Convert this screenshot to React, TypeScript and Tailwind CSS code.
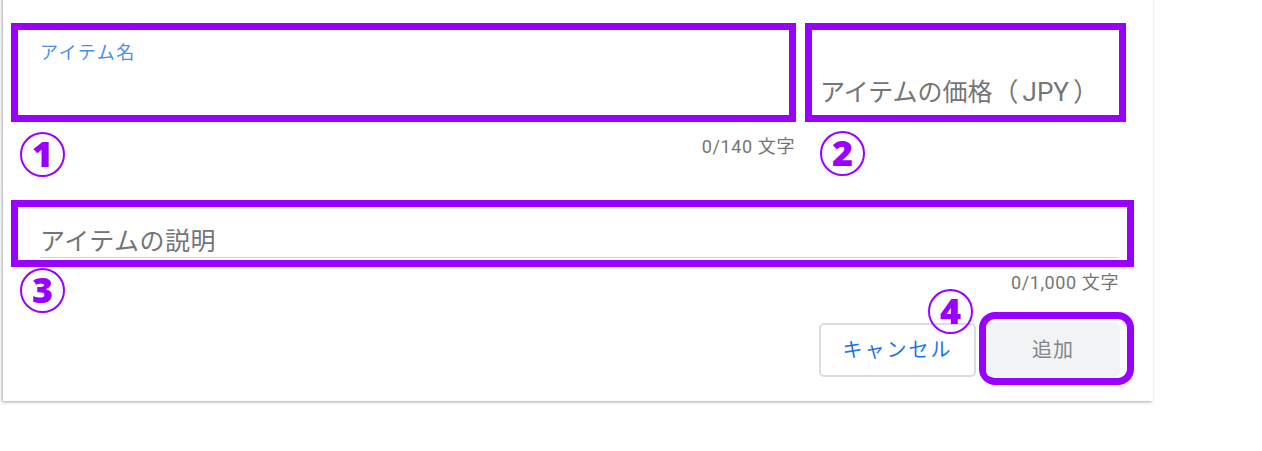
import React from 'react';

// circled step markers laid over the form
const Step: React.FC<{ n: string; className: string }> = ({ n, className }) => (
    <div
        className={`absolute w-[45px] h-[45px] rounded-full border-2 border-[#9900ff] flex items-center justify-center text-[#9900ff] text-[36px] leading-none font-black font-['Open_Sans',sans-serif] ${className}`}
    >
        <span className="-mt-[1px]">{n}</span>
    </div>
);

export default function App() {
    return (
        <div className="min-h-screen bg-white font-['Roboto','Noto_Sans_CJK_JP',sans-serif]">
            <div className="relative ml-[3px] -mt-[10px] w-[1150px] h-[411px] bg-white shadow-[-1px_1px_3px_rgba(0,0,0,0.35)] pl-[8px] pt-[33px]">
                {/* name + price */}
                <div className="flex gap-[9px]">
                    <div className="w-[785px] flex flex-col">
                        <div className="h-[99px] border-[7px] border-[#9900ff] pl-[22px] pt-[11px]">
                            <span className="text-[18px] leading-[24px] tracking-[1.5px] text-[#4a8fe8]">アイテム名</span>
                        </div>
                        <div className="mt-[13px] h-[24px] text-right pr-[1px] text-[18px] leading-[24px] tracking-[0.6px] text-[#757575]">
                            0/140 文字
                        </div>
                    </div>
                    <div className="w-[321px] h-[99px] border-[7px] border-[#9900ff] flex items-end pl-[8px] pb-[7px]">
                        <span className="text-[25px] leading-[30px] text-[#757575] whitespace-nowrap">
                            アイテムの価格<span className="text-[26px]">（<span className="px-[4px]">JPY</span>）</span>
                        </span>
                    </div>
                </div>

                {/* description */}
                <div className="mt-[41px] w-[1123px] h-[67px] border-[7px] border-[#9900ff] flex flex-col justify-end pl-[22px] pr-[9px] pb-[2px]">
                    <div className="border-b border-[#d4d4d4] text-[25px] leading-[30px] tracking-[0.5px] text-[#757575]">
                        アイテムの説明
                    </div>
                </div>
                <div className="mt-[4px] w-[1123px] h-[24px] text-right pr-[15px] text-[18px] leading-[24px] tracking-[0.6px] text-[#757575]">
                    0/1,000 文字
                </div>

                {/* actions */}
                <div className="mt-[17px] w-[1123px] flex justify-end items-start gap-[3px]">
                    <button className="mt-[11px] w-[157px] h-[54px] rounded-[5px] border-2 border-[#dadce0] bg-white text-[20px] tracking-[2px] text-[#1a73e8]">
                        キャンセル
                    </button>
                    <div className="w-[155px] h-[73px] rounded-[16px] border-[7px] border-[#9900ff] pt-[3px] pr-[7px]">
                        <button className="w-[134px] h-[55px] rounded-[6px] bg-[#f1f3f4] text-[20px] tracking-[1px] text-[#80868b]">
                            追加
                        </button>
                    </div>
                </div>

                <Step n="1" className="left-[17px] top-[142px]" />
                <Step n="2" className="left-[817px] top-[141px]" />
                <Step n="3" className="left-[17px] top-[278px]" />
                <Step n="4" className="left-[925px] top-[299px]" />
            </div>
        </div>
    );
}
